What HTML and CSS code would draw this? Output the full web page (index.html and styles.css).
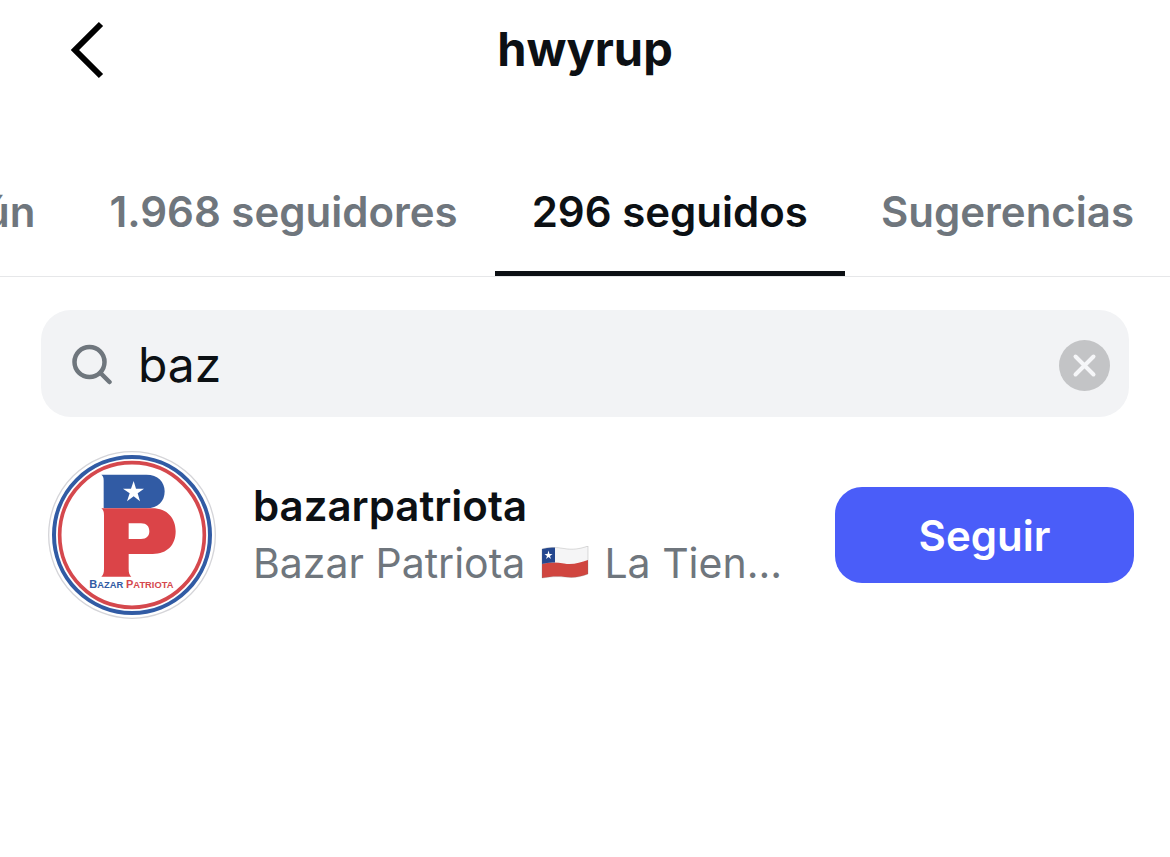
FILE: index.html
```html
<!DOCTYPE html>
<html lang="es">
<head>
<meta charset="utf-8">
<meta name="viewport" content="width=device-width, initial-scale=1">
<title>hwyrup</title>
<link rel="stylesheet" href="styles.css">
</head>
<body>
<header class="topbar">
  <button class="back" type="button" aria-label="Atrás">
    <svg width="36" height="60" viewBox="0 0 36 60" fill="none" stroke="#000" stroke-width="6"><path d="M33 4 7 30 33 56"/></svg>
  </button>
  <h1 class="title">hwyrup</h1>
</header>
<nav class="tabs">
  <a class="tab" href="#comun">en común</a>
  <a class="tab" href="#seguidores">1.968 seguidores</a>
  <a class="tab active" href="#seguidos" aria-current="page">296 seguidos</a>
  <a class="tab" href="#sugerencias">Sugerencias</a>
</nav>
<main class="content">
  <form class="search" role="search">
    <svg class="search-icon" width="42" height="42" viewBox="0 0 42 42" fill="none" stroke="#6f767d" stroke-width="4.5" stroke-linecap="round"><circle cx="17.500" cy="19" r="15"/><path d="m28.500 30 9 9"/></svg>
    <input class="search-input" type="text" value="baz" aria-label="Buscar">
    <button class="clear" type="button" aria-label="Borrar">
      <svg width="51" height="51" viewBox="0 0 51 51"><circle cx="25.5" cy="25.5" r="25.5" fill="#c3c4c6"/><path d="m16.500 16.500 18 18m0-18-18 18" stroke="#f5f6f8" stroke-width="4" stroke-linecap="round"/></svg>
    </button>
  </form>
  <ul class="people">
    <li class="person">
      <svg class="avatar" viewBox="24 33 504 504" role="img" aria-label="Bazar Patriota">
        <circle cx="276" cy="285" r="250" fill="#fff" stroke="#d5d5d9" stroke-width="4"/>
        <circle cx="276" cy="285" r="234" fill="none" stroke="#315ba4" stroke-width="12"/>
        <circle cx="276" cy="285" r="217" fill="none" stroke="#d5484d" stroke-width="11"/>
        <path fill="#315ba4" d="M184 104H319C354 104 374 126 374 154C374 184 354 205 320 205H191V122C191 112 189 108 184 104Z"/>
        <path fill="#fff" d="m281 123 7 23h24l-19 14 7 24-19-15-20 15 8-24-20-14h24z"/>
        <path fill="#db4448" fill-rule="evenodd" d="M184 205H337C382 205 407 235 407 274C407 315 382 342 338 342H266V386C266 398 268 404 274 410H184C190 404 192 398 192 386V226C192 215 190 210 184 205ZM266 250V297H303C320 297 328 288 328 274C328 259 320 250 303 250Z"/>
        <text class="logo-text" x="148" y="444" fill="#315ba4">B<tspan class="logo-small">AZAR</tspan></text>
        <text class="logo-text" x="258" y="444" fill="#d5484d">P<tspan class="logo-small">ATRIOTA</tspan></text>
      </svg>
      <div class="info">
        <a class="username" href="#bazarpatriota">bazarpatriota</a>
        <p class="fullname">Bazar Patriota <svg class="flag" viewBox="0 0 48 34" role="img" aria-label="Bandera de Chile">
          <path fill="#f5f5f6" d="M1 3C7 1 15 1 23 2.500S39 3 47 0V28C39 31 33 32 24 31S8 31 1 32Z"/>
          <path fill="#d0453f" d="M1 18C8 16 15 16 23 17.500S39 17 47 14V28C39 31 33 32 24 31S8 31 1 32Z"/>
          <path fill="#24478f" d="M1 3Q7 1 14 1.500V16.500Q7 16 1 18Z"/>
          <path fill="#fff" d="m7.500 4.500 1 3.500h3L9 10l1 3-2.500-2L5 13l1-3-2.500-2h3z"/>
          <path fill="none" stroke="#777" stroke-opacity=".25" d="M1 3C7 1 15 1 23 2.500S39 3 47 0V28C39 31 33 32 24 31S8 31 1 32Z"/>
        </svg> La Tien...</p>
      </div>
      <button class="follow" type="button">Seguir</button>
    </li>
  </ul>
</main>
</body>
</html>
```
FILE: styles.css
```css
* {
  box-sizing: border-box;
}
body {
  margin: 0;
  background: #fff;
  color: #0c1014;
  font-family: Inter, "Liberation Sans", sans-serif;
}
button {
  border: 0;
  padding: 0;
  background: none;
  font: inherit;
}
a {
  color: inherit;
  text-decoration: none;
}
.topbar {
  display: grid;
  grid-template-columns: 1fr auto 1fr;
  align-items: center;
  height: 100px;
  padding: 0 68px;
}
.back {
  justify-self: start;
  display: flex;
}
.title {
  margin: 0;
  padding-bottom: 2px;
  font-size: 47px;
  line-height: 60px;
  font-weight: 700;
}
.tabs {
  display: flex;
  justify-content: flex-end;
  margin-top: 48px;
  overflow: hidden;
  border-bottom: 1px solid #e6e7e9;
}
.tab {
  flex: none;
  padding: 36px 37px 32px;
  border-bottom: 5px solid transparent;
  color: #6f767d;
  font-size: 42px;
  line-height: 55px;
  font-weight: 600;
  white-space: nowrap;
}
.tab:last-child {
  padding-right: 36px;
  padding-left: 36px;
}
.tab.active {
  border-color: #0c1014;
  color: #0c1014;
}
.content {
  padding: 33px 36px 0 41px;
}
.search {
  display: flex;
  align-items: center;
  gap: 24px;
  height: 107px;
  margin-right: 5px;
  padding: 0 19px 0 31px;
  border-radius: 30px;
  background: #f2f3f5;
}
.search-icon {
  flex: none;
}
.search-input {
  flex: 1;
  min-width: 0;
  border: 0;
  padding: 2px 0 0;
  outline: 0;
  background: none;
  color: #0c1014;
  font: 400 48px/60px Inter, "Liberation Sans", sans-serif;
}
.clear {
  display: flex;
  margin-top: 4px;
}
.people {
  margin: 0;
  padding: 34px 0 0 7px;
  list-style: none;
}
.person {
  display: flex;
  align-items: center;
}
.avatar {
  flex: none;
  width: 168px;
  height: 168px;
}
.logo-text {
  font: 700 33px "Liberation Sans", sans-serif;
  stroke: currentColor;
  stroke-width: 0;
}
.logo-small {
  font-size: 28px;
}
.info {
  flex: 1;
  min-width: 0;
  margin-left: 37px;
}
.username {
  display: block;
  font-size: 42px;
  line-height: 56px;
  font-weight: 600;
}
.fullname {
  margin: 0;
  color: #6f767d;
  font-size: 41px;
  line-height: 58px;
  white-space: nowrap;
}
.flag {
  width: 48px;
  height: 34px;
  margin: 0 4px;
  vertical-align: -2px;
}
.follow {
  flex: none;
  width: 299px;
  height: 96px;
  border-radius: 27px;
  background: #4a5df9;
  color: #fff;
  font-size: 42px;
  font-weight: 600;
}
```
